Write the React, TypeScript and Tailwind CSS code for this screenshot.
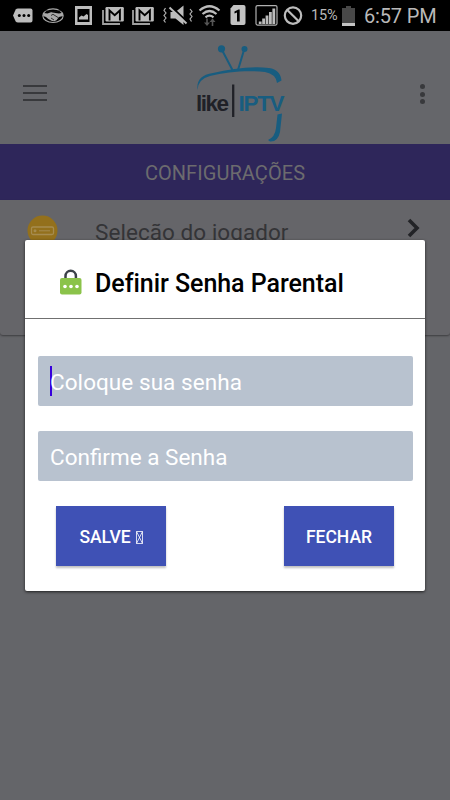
import React from "react";

function StatusBar() {
  return (
    <header className="flex h-[31px] shrink-0 items-center bg-black text-[#b9b9b9]">
      <svg width="311" height="31" viewBox="0 0 311 31" fill="none" className="shrink-0">
        <path d="M18 8.500h12.500q2 0 2 2v10q0 2-2 2H18q-1.500 0-2.300-1l-2.700-6 2.700-6q.8-1 2.300-1z" fill="#bcbcbc" />
        <g fill="#000"><circle cx="19.300" cy="15.600" r="1.500" /><circle cx="24" cy="15.600" r="1.500" /><circle cx="28.700" cy="15.600" r="1.500" /></g>
        <ellipse cx="53" cy="15.700" rx="10.200" ry="6.800" stroke="#a9a9a9" strokeWidth="1.100" />
        <path d="M43.500 13l4 .6 4-1.600 4 1 3.500.6 3.800-.8.200 3.200-4 1-2.500 3.200-2.200 1-2.300-.2-3.700-2-2.300-2-2.800-1z" fill="#a9a9a9" />
        <path d="M51 15.500l2-1.200 5.500 3.500M51 18l3 2M45 10.500q8 3 16 0" stroke="#111" strokeWidth=".8" />
        <path d="M75 6h17v19H75z" fill="#bcbcbc" />
        <path d="M77.500 9h12v13h-12z" fill="#000" />
        <path d="M79 19.500v-2l2.500-2 2 1 3-2.500 1.500 1v4.500z" fill="#bcbcbc" />
        {[0, 30].map((dx) => (
          <g key={dx} transform={`translate(${dx} 0)`}>
            <path d="M103 10v14h17" stroke="#a0a0a0" strokeWidth="1.800" />
            <rect x="105.500" y="7" width="18.300" height="14.500" rx="1.200" fill="#bcbcbc" />
            <path d="M109.500 20.500V10.500l5.200 4.800 5.200-4.800v10" stroke="#000" strokeWidth="1.900" />
          </g>
        ))}
        <path d="M170.500 12h5l8-6.500v19.500l-8-6.500h-5z" fill="#bcbcbc" />
        <path d="M171 6.500l17.500 16.500" stroke="#000" strokeWidth="2" />
        <path d="M169.500 7.500l17 16" stroke="#bcbcbc" strokeWidth="2" />
        <path d="M165.500 8l-1.500 2.500 2 2.500-2 2.500 2 2.500-2 2.500 1.500 2M190 9l2 2.500-2 2.500 2 2.500-2 2.500 1.500 2.500" stroke="#b0b0b0" strokeWidth="1.200" />
        <path d="M199.500 10.500q10-8.500 20 0M202.500 14q7-6 14 0M205.500 17.300q4-3.200 8 0" stroke="#bcbcbc" strokeWidth="2.200" />
        <path d="M207 18.500v6.500M212.500 26v-6.500" stroke="#555" strokeWidth="1.600" />
        <path d="M204 22.500h6l-3 3.500zM209.500 22h6l-3-3.500z" fill="#555" />
        <path d="M233.500 5h10q2 0 2 2v16q0 2-2 2h-11q-2 0-2-2V8.500z" fill="#c2c2c2" />
        <path d="M234.500 11.500l4-2h1.200v12h-2.700v-9l-2.500 1z" fill="#000" />
        <rect x="256" y="5.600" width="21" height="19.500" rx="1.500" stroke="#b0b0b0" strokeWidth="1.200" />
        <path d="M258.800 21.500h2.800V24h-2.800zM262.200 18.500h2.800V24h-2.800zM265.600 15.500h2.800V24h-2.800zM269 12h2.800v12H269zM272.400 8.500h2.800V24h-2.800z" fill="#bcbcbc" />
        <circle cx="293" cy="15.600" r="8.200" stroke="#bcbcbc" strokeWidth="2.200" />
        <path d="M287.300 10l11.400 11.300" stroke="#bcbcbc" strokeWidth="2.200" />
      </svg>
      <span className="w-[31px] whitespace-nowrap pt-px text-[14.500px] tracking-[-0.200px]">15%</span>
      <svg width="13" height="20" viewBox="0 0 13 20" className="shrink-0">
        <path d="M4 0h5v2h4v18H0V2h4z" fill="#484848" />
        <path d="M0 17h13v3H0z" fill="#c5c5c5" />
      </svg>
      <span className="ml-[9px] whitespace-nowrap pt-px text-[20px] tracking-[-0.150px]">6:57 PM</span>
    </header>
  );
}

function Logo() {
  return (
    <svg width="96" height="110" viewBox="192 35 96 110" className="shrink-0 overflow-visible">
      <g fill="#185d80">
        <circle cx="221.500" cy="48.800" r="3.600" />
        <circle cx="244.500" cy="49" r="3" />
        <path d="M197.500 90C196.500 80 201 75 213 73C231 69 251 66 269 68C277 69 281 74 281.500 80.500L277 83Q276 74 265 72C247 70 226 72 210 76Q198 79 197.500 90Z" />
        <path d="M277.500 114.500L282 113.500L280 132Q278 142 270 141.500L268 140Q275 137 276 128Z" />
      </g>
      <path d="M222 50L233 71M244 50L238 70" stroke="#185d80" strokeWidth="2" fill="none" />
      <text x="196" y="111" fontSize="22.500" fontWeight="700" letterSpacing="-1.500" fill="#202127" fontFamily="Liberation Sans, sans-serif">like</text>
      <path d="M233.200 84.500V117" stroke="#202127" strokeWidth="2.300" />
      <text x="238.500" y="111" fontSize="22.500" fontWeight="700" letterSpacing="-1.300" fill="#185d80" fontFamily="Liberation Sans, sans-serif">IPTV</text>
    </svg>
  );
}

function Toolbar() {
  return (
    <div className="flex h-[113px] shrink-0 items-center bg-[#65666a] pl-[23px] pr-[25px]">
      <div className="flex w-6 flex-col gap-[5px] pt-[11px]">
        <span className="h-[2px] bg-[#38393c]" />
        <span className="h-[2px] bg-[#38393c]" />
        <span className="h-[2px] bg-[#38393c]" />
      </div>
      <div className="ml-[145px] flex pt-[5px]"><Logo /></div>
      <div className="ml-auto flex flex-col gap-[2.500px] pt-[13px]">
        <span className="size-[5px] rounded-full bg-[#38393c]" />
        <span className="size-[5px] rounded-full bg-[#38393c]" />
        <span className="size-[5px] rounded-full bg-[#38393c]" />
      </div>
    </div>
  );
}

function LockIcon() {
  return (
    <svg width="24" height="28" viewBox="0 0 24 28" className="-mt-[3px] shrink-0">
      <path d="M6.500 12V8a5.200 5.200 0 0 1 10.400 0v4" fill="none" stroke="#3c4249" strokeWidth="2.500" />
      <rect x="1" y="10" width="21.500" height="16.500" rx="2" fill="#8bc34a" />
      <g fill="#fff"><circle cx="6" cy="18.500" r="1.800" /><circle cx="12" cy="18.500" r="1.800" /><circle cx="18" cy="18.500" r="1.800" /></g>
    </svg>
  );
}

function Dialog() {
  return (
    <section className="absolute left-[25px] top-[240px] flex h-[351px] w-[400px] flex-col rounded-[2px] bg-white shadow-[0_1px_3px_rgba(0,0,0,0.7)]">
      <div className="flex h-[79px] shrink-0 items-center border-b border-[#707070] pl-[34px] pt-[9px]">
        <LockIcon />
        <h2 className="ml-[12px] whitespace-nowrap text-[25px] font-medium leading-[30px] tracking-[-0.040px] text-black">Definir Senha Parental</h2>
      </div>
      <div className="flex flex-col gap-[25px] px-[12.500px] pt-[37px]">
        <div className="flex h-[50px] items-center rounded-[2px] bg-[#b8c2cf] pl-[12.500px]">
          <span className="-mr-[2px] h-[30px] w-[2px] shrink-0 bg-[#3700dc]" />
          <span className="whitespace-nowrap pt-[4px] text-[22.500px] tracking-[0.060px] text-white">Coloque sua senha</span>
        </div>
        <div className="flex h-[50px] items-center rounded-[2px] bg-[#b8c2cf] pl-[12.500px]">
          <span className="whitespace-nowrap pt-[4px] text-[22.500px] text-white">Confirme a Senha</span>
        </div>
      </div>
      <div className="flex justify-between pl-[31px] pr-[31px] pt-[25px]">
        <button className="flex h-[60px] w-[110px] items-center justify-center gap-[5px] bg-[#3f51b5] pt-[2px] text-[17.500px] font-medium text-white shadow-[0_2px_2px_rgba(0,0,0,0.25)]">
          SALVE
          <svg width="7" height="13" viewBox="0 0 7 13" fill="none" stroke="#fff" strokeWidth=".8"><path d="M.5.5h6v12h-6zM.5.5l6 12M6.500.5l-6 12" /></svg>
        </button>
        <button className="flex h-[60px] w-[110px] items-center justify-center bg-[#3f51b5] pt-[2px] text-[17.500px] font-medium text-white shadow-[0_2px_2px_rgba(0,0,0,0.25)]">FECHAR</button>
      </div>
    </section>
  );
}

export default function App() {
  return (
    <main className="relative flex h-[800px] w-[450px] flex-col overflow-hidden bg-[#646569] font-['Roboto',sans-serif]">
      <StatusBar />
      <Toolbar />
      <h1 className="flex h-[56px] shrink-0 items-center justify-center bg-[#2e265a] pt-[2px] text-[20px] tracking-[0.060px] text-[#6c6b6e]">CONFIGURAÇÕES</h1>
      <div className="flex h-[135px] shrink-0 items-start rounded-b-[3px] bg-[#656569] pl-[27px] pt-[15px] shadow-[0_1px_2px_rgba(0,0,0,0.4)]">
        <svg width="31" height="31" viewBox="0 0 31 31" className="shrink-0">
          <circle cx="15.500" cy="15.500" r="15" fill="#93701c" />
          <rect x="4.500" y="12" width="22" height="7.500" rx="1.500" fill="none" stroke="#a68c50" strokeWidth="1.300" />
          <circle cx="8" cy="15.800" r="1.500" fill="#a68c50" />
          <path d="M12 15.800h11" stroke="#a68c50" />
        </svg>
        <span className="ml-[37px] whitespace-nowrap pt-[2px] text-[22.500px] leading-[30px] tracking-[0.060px] text-[#343437]">Seleção do jogador</span>
        <svg width="14" height="20" viewBox="0 0 14 20" className="ml-auto mr-[29px] mt-[3px]">
          <path d="M2 2l8 8-8 8" fill="none" stroke="#222327" strokeWidth="3.600" />
        </svg>
      </div>
      <Dialog />
    </main>
  );
}
